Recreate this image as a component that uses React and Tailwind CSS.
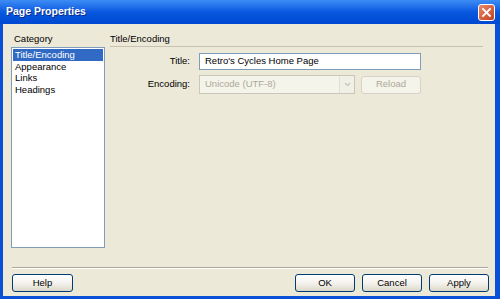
import React from "react";

const font = { fontFamily: '"Liberation Sans", Arial, sans-serif' };

function Btn({ children, w = "w-[60px]", disabled = false }) {
  return (
    <div
      className={`${w} h-[18px] flex items-center justify-center rounded-[3px] text-[9.5px] ${
        disabled
          ? "border border-[#d6d3c6] bg-[#f5f4ea] text-[#aca899]"
          : "border border-[#003c74] bg-gradient-to-b from-[#ffffff] via-[#f4f3ee] to-[#dcd8c8] text-black"
      }`}
    >
      {children}
    </div>
  );
}

export default function App() {
  return (
    <div
      className="w-[500px] h-[299px] flex flex-col bg-[#0a4fd8] overflow-hidden"
      style={font}
    >
      {/* Title bar */}
      <div className="h-[24px] flex items-center justify-between pl-[6px] pr-[5px] bg-gradient-to-b from-[#3d8cf5] via-[#0858e0] to-[#0048d0]">
        <span className="text-white font-bold text-[10.5px] [text-shadow:1px_1px_0_#0a2a8a]">
          Page Properties
        </span>
        <div className="w-[17px] h-[17px] mt-[1px] rounded-[3px] border border-white bg-gradient-to-br from-[#e8896a] to-[#c33f1b] flex items-center justify-center">
          <svg width="9" height="9" viewBox="0 0 9 9">
            <path d="M1 1 L8 8 M8 1 L1 8" stroke="white" strokeWidth="1.8" strokeLinecap="square" />
          </svg>
        </div>
      </div>

      {/* Body */}
      <div className="flex-1 ml-[3px] mr-[5px] mb-[3px] bg-[#ece9d8] flex flex-col pl-[8px] pr-[7px] pt-[8px] text-[9.5px] text-black">
        <div className="flex gap-[5px]">
          {/* Category column */}
          <div className="w-[94px] flex flex-col">
            <div className="h-[15px] pl-[3px] leading-[13px]">Category</div>
            <div className="h-[201px] bg-white border border-[#7f9db9] p-[1px] flex flex-col leading-[11.5px]">
              <div className="bg-[#316ac5] text-white pl-[2px]">Title/Encoding</div>
              <div className="pl-[2px]">Appearance</div>
              <div className="pl-[2px]">Links</div>
              <div className="pl-[2px]">Headings</div>
            </div>
          </div>

          {/* Right panel */}
          <div className="w-[373px] flex flex-col">
            <div className="h-[15px] leading-[13px] border-b border-[#c5c2b2]">Title/Encoding</div>
            <div className="flex flex-col pt-[6px] gap-[5px]">
              <div className="flex items-center">
                <div className="w-[80px] text-right">Title:</div>
                <div className="ml-[9px] w-[222px] h-[17px] bg-white border border-[#7f9db9] flex items-center pl-[5px]">
                  Retro's Cycles Home Page
                </div>
              </div>
              <div className="flex items-center">
                <div className="w-[80px] text-right">Encoding:</div>
                <div className="ml-[9px] w-[156px] h-[19px] bg-[#f5f4ea] border border-[#c9c7ba] flex items-center justify-between pl-[5px] text-[#aca899]">
                  <span>Unicode (UTF-8)</span>
                  <div className="w-[15px] h-[17px] flex items-center justify-center bg-[#f1f0e6] border-l border-[#e2e0d4]">
                    <svg width="7" height="5" viewBox="0 0 7 5">
                      <path d="M1 1 L3.5 3.5 L6 1" stroke="#c9c7ba" strokeWidth="1.3" fill="none" />
                    </svg>
                  </div>
                </div>
                <div className="ml-[6px]">
                  <Btn disabled>Reload</Btn>
                </div>
              </div>
            </div>
          </div>
        </div>

        <div className="flex-1" />
        <div className="w-[476px] ml-[1px] border-t border-[#aca899] border-b border-b-white" />
        <div className="flex items-center mt-[5px] mb-[4px] ml-[1px]">
          <Btn w="w-[61px]">Help</Btn>
          <div className="flex-1" />
          <div className="flex gap-[7px] mr-[-1px]">
            <Btn>OK</Btn>
            <Btn>Cancel</Btn>
            <Btn>Apply</Btn>
          </div>
        </div>
      </div>
    </div>
  );
}
